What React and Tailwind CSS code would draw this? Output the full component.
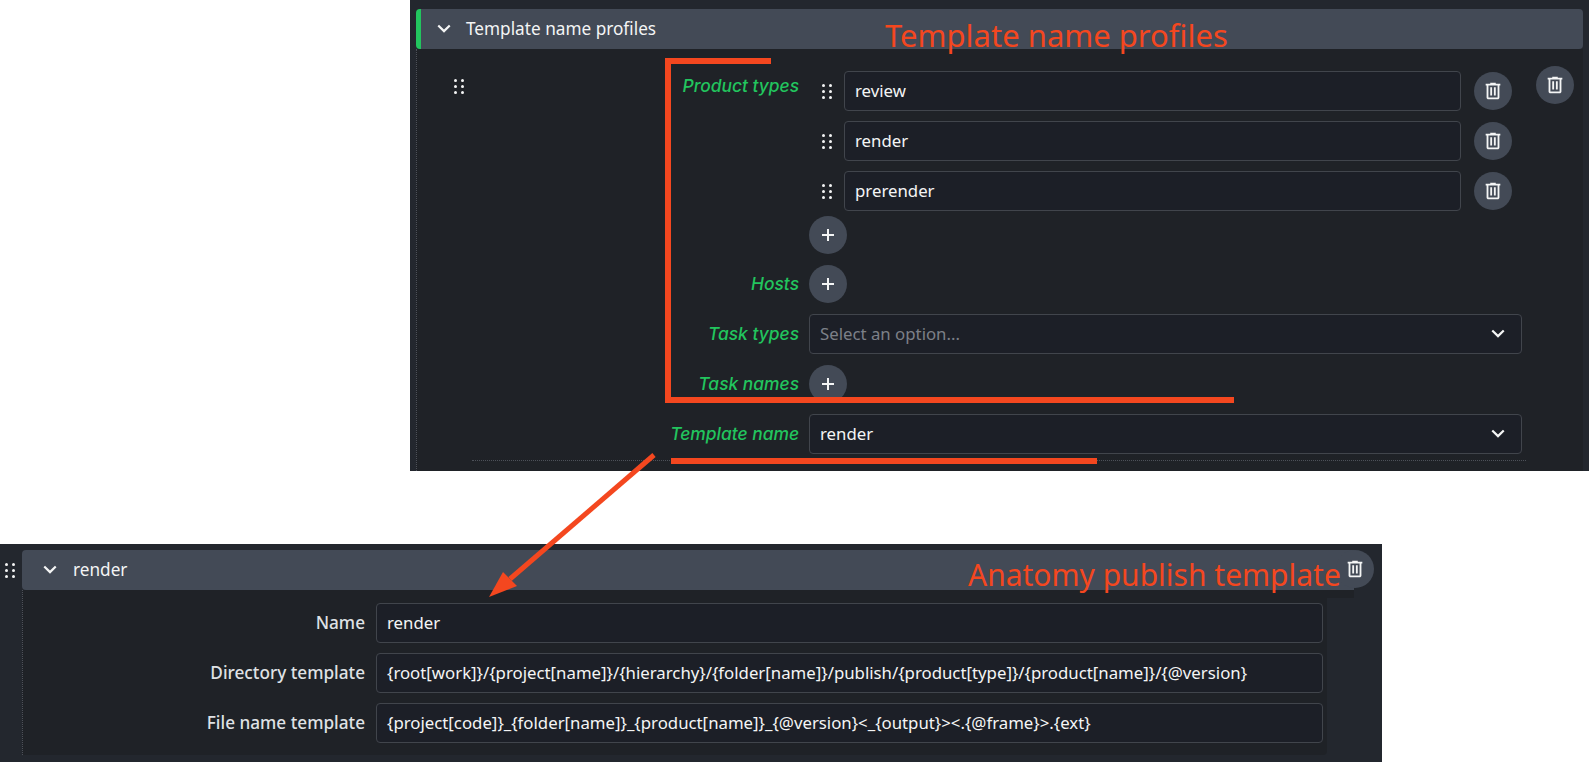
import React from "react";

const sans = "font-['Noto_Sans',sans-serif]";

const Grip = () => (
  <svg width="10" height="15" viewBox="0 0 10 15" fill="#f4f5f5">
    <rect x="0" y="0" width="3" height="3" rx="1.5" />
    <rect x="7" y="0" width="3" height="3" rx="1.5" />
    <rect x="0" y="6" width="3" height="3" rx="1.5" />
    <rect x="7" y="6" width="3" height="3" rx="1.5" />
    <rect x="0" y="12" width="3" height="3" rx="1.5" />
    <rect x="7" y="12" width="3" height="3" rx="1.5" />
  </svg>
);

const Chevron = ({ size = 26 }) => (
  <svg width={size} height={size} viewBox="0 -960 960 960" fill="#f4f5f5">
    <path d="M480-345 240-585l56-56 184 184 184-184 56 56-240 240Z" />
  </svg>
);

const Trash = () => (
  <svg width="22" height="22" viewBox="0 -960 960 960" fill="#f4f5f5">
    <path d="M280-120q-33 0-56.5-23.5T200-200v-520h-40v-80h200v-40h240v40h200v80h-40v520q0 33-23.5 56.5T680-120H280Zm400-600H280v520h400v-520ZM360-280h80v-360h-80v360Zm160 0h80v-360h-80v360ZM280-720v520-520Z" />
  </svg>
);

const RoundButton = ({ children }) => (
  <div className="w-[38px] h-[38px] rounded-full bg-[#434a56] flex items-center justify-center shrink-0">
    {children}
  </div>
);

const Plus = () => (
  <RoundButton>
    <svg width="12" height="12" viewBox="0 0 12 12" fill="#f4f5f5">
      <rect x="5" y="0" width="2" height="12" />
      <rect x="0" y="5" width="12" height="2" />
    </svg>
  </RoundButton>
);

const Field = ({ children, muted, className = "" }) => (
  <div
    className={`h-10 rounded border border-[#41454c] bg-[#1c1f27] pl-[10px] pr-2 flex items-center whitespace-nowrap text-[16.8px] ${
      muted ? "text-[#7c8088]" : "text-[#f4f5f5]"
    } ${className}`}
  >
    {children}
  </div>
);

const GreenLabel = ({ children, className = "h-[38px]" }) => (
  <div
    className={`w-[139px] shrink-0 pr-[10px] flex items-center justify-end italic font-medium text-[17.4px] text-[#22c55e] whitespace-nowrap font-['Inter',sans-serif] ${className}`}
  >
    {children}
  </div>
);

const ListItem = ({ value }) => (
  <div className="flex items-center h-10">
    <div className="w-[35px] pl-[13px] shrink-0 flex">
      <Grip />
    </div>
    <Field className="w-[617px]">{value}</Field>
    <div className="ml-[13px]">
      <RoundButton>
        <Trash />
      </RoundButton>
    </div>
  </div>
);

const Select = ({ value, muted }) => (
  <Field muted={muted} className="w-[713px] justify-between">
    <span className="-mt-px">{value}</span>
    <span className="mr-[2px]">
      <Chevron />
    </span>
  </Field>
);

const ProfilesPanel = () => (
  <div className="ml-[410px] h-[471px] shrink-0 bg-[#23272e] px-[6px] pt-[9px]">
    <div className="h-10 rounded border-l-[5px] border-[#22c55e] bg-[#434a56] pl-[10px] flex items-center gap-[9px] text-[17.2px] text-[#f4f5f5]">
      <Chevron />
      <span>Template name profiles</span>
    </div>
    <div className="h-[422px] bg-[#1f2227] border-l border-dotted border-[#4d5159] flex pl-[37px] relative">
      <div className="pt-[30px] shrink-0 w-[216px]">
        <Grip />
      </div>
      <div className="absolute left-[55px] top-0 w-[1054px] h-[412px] border-b border-dotted border-[#4d5159]" />
      <div className="pt-[22px] flex flex-col gap-[10px] w-[866px] shrink-0 relative">
        <div className="flex">
          <GreenLabel className="h-[30px]">Product types</GreenLabel>
          <div className="flex flex-col">
            <div className="flex flex-col gap-[10px]">
              <ListItem value="review" />
              <ListItem value="render" />
              <ListItem value="prerender" />
            </div>
            <div className="mt-[5px] h-[39px]">
              <Plus />
            </div>
          </div>
        </div>
        <div className="flex h-10">
          <GreenLabel>Hosts</GreenLabel>
          <Plus />
        </div>
        <div className="flex h-10 -mt-px">
          <GreenLabel className="h-10">Task types</GreenLabel>
          <Select value="Select an option..." muted />
        </div>
        <div className="flex h-10 mt-px">
          <GreenLabel>Task names</GreenLabel>
          <Plus />
        </div>
        <div className="flex h-10 -mt-px">
          <GreenLabel className="h-10">Template name</GreenLabel>
          <Select value="render" />
        </div>
      </div>
      <div className="pt-[17px]">
        <RoundButton>
          <Trash />
        </RoundButton>
      </div>
    </div>
  </div>
);

const TemplateRow = ({ label, value }) => (
  <div className="flex items-center">
    <div className="w-[353px] shrink-0 pr-[11px] text-right text-[17.2px] font-medium text-[#dfe1e4] whitespace-nowrap">
      {label}
    </div>
    <Field className="w-[947px]">{value}</Field>
  </div>
);

const AnatomyPanel = () => (
  <div className="mt-[73px] w-[1382px] h-[218px] shrink-0 bg-[#23272e] pt-[6px] flex">
    <div className="w-[22px] shrink-0 pt-[13px] pl-[5px]">
      <Grip />
    </div>
    <div className="w-[1332px] shrink-0">
      <div className="h-10 rounded-l bg-[#434a56] pl-[15px] flex items-center gap-[10px] text-[17.2px] text-[#f4f5f5] relative">
        <Chevron />
        <span>render</span>
        <div className="absolute right-[-20px] top-0 w-[38px] h-[38px] rounded-full bg-[#434a56] flex items-center justify-center">
          <Trash />
        </div>
      </div>
      <div className="w-[1305px] h-[165px] rounded-br bg-[#1f2227] border-l border-dotted border-[#4d5159] pt-[13px] flex flex-col gap-[10px] relative">
        <div className="absolute left-full top-0 w-[27px] h-2 bg-[#1f2227]" />
        <TemplateRow label="Name" value="render" />
        <TemplateRow
          label="Directory template"
          value="{root[work]}/{project[name]}/{hierarchy}/{folder[name]}/publish/{product[type]}/{product[name]}/{@version}"
        />
        <TemplateRow
          label="File name template"
          value="{project[code]}_{folder[name]}_{product[name]}_{@version}<_{output}><.{@frame}>.{ext}"
        />
      </div>
    </div>
  </div>
);

const Annotations = () => (
  <>
    <div className="absolute left-[885px] top-[11px] text-[31px] leading-[48px] text-[#f4471f] whitespace-nowrap">
      Template name profiles
    </div>
    <div className="absolute left-[968px] top-[551px] text-[30px] leading-[48px] text-[#f4471f] whitespace-nowrap">
      Anatomy publish template
    </div>
    <div className="absolute left-[665px] top-[58px] w-[106px] h-[6px] bg-[#f4471f]" />
    <div className="absolute left-[665px] top-[58px] w-[6px] h-[345px] bg-[#f4471f]" />
    <div className="absolute left-[665px] top-[397px] w-[569px] h-[6px] bg-[#f4471f]" />
    <div className="absolute left-[671px] top-[458px] w-[426px] h-[6px] bg-[#f4471f]" />
    <svg className="absolute left-0 top-0" width="1589" height="762">
      <line x1="654" y1="455" x2="510" y2="579" stroke="#f4471f" strokeWidth="5" />
      <polygon points="489,597 503,572 517,586" fill="#f4471f" />
    </svg>
  </>
);

export default function App() {
  return (
    <div className={`relative w-[1589px] h-[762px] overflow-hidden bg-white flex flex-col ${sans}`}>
      <ProfilesPanel />
      <AnatomyPanel />
      <Annotations />
    </div>
  );
}
